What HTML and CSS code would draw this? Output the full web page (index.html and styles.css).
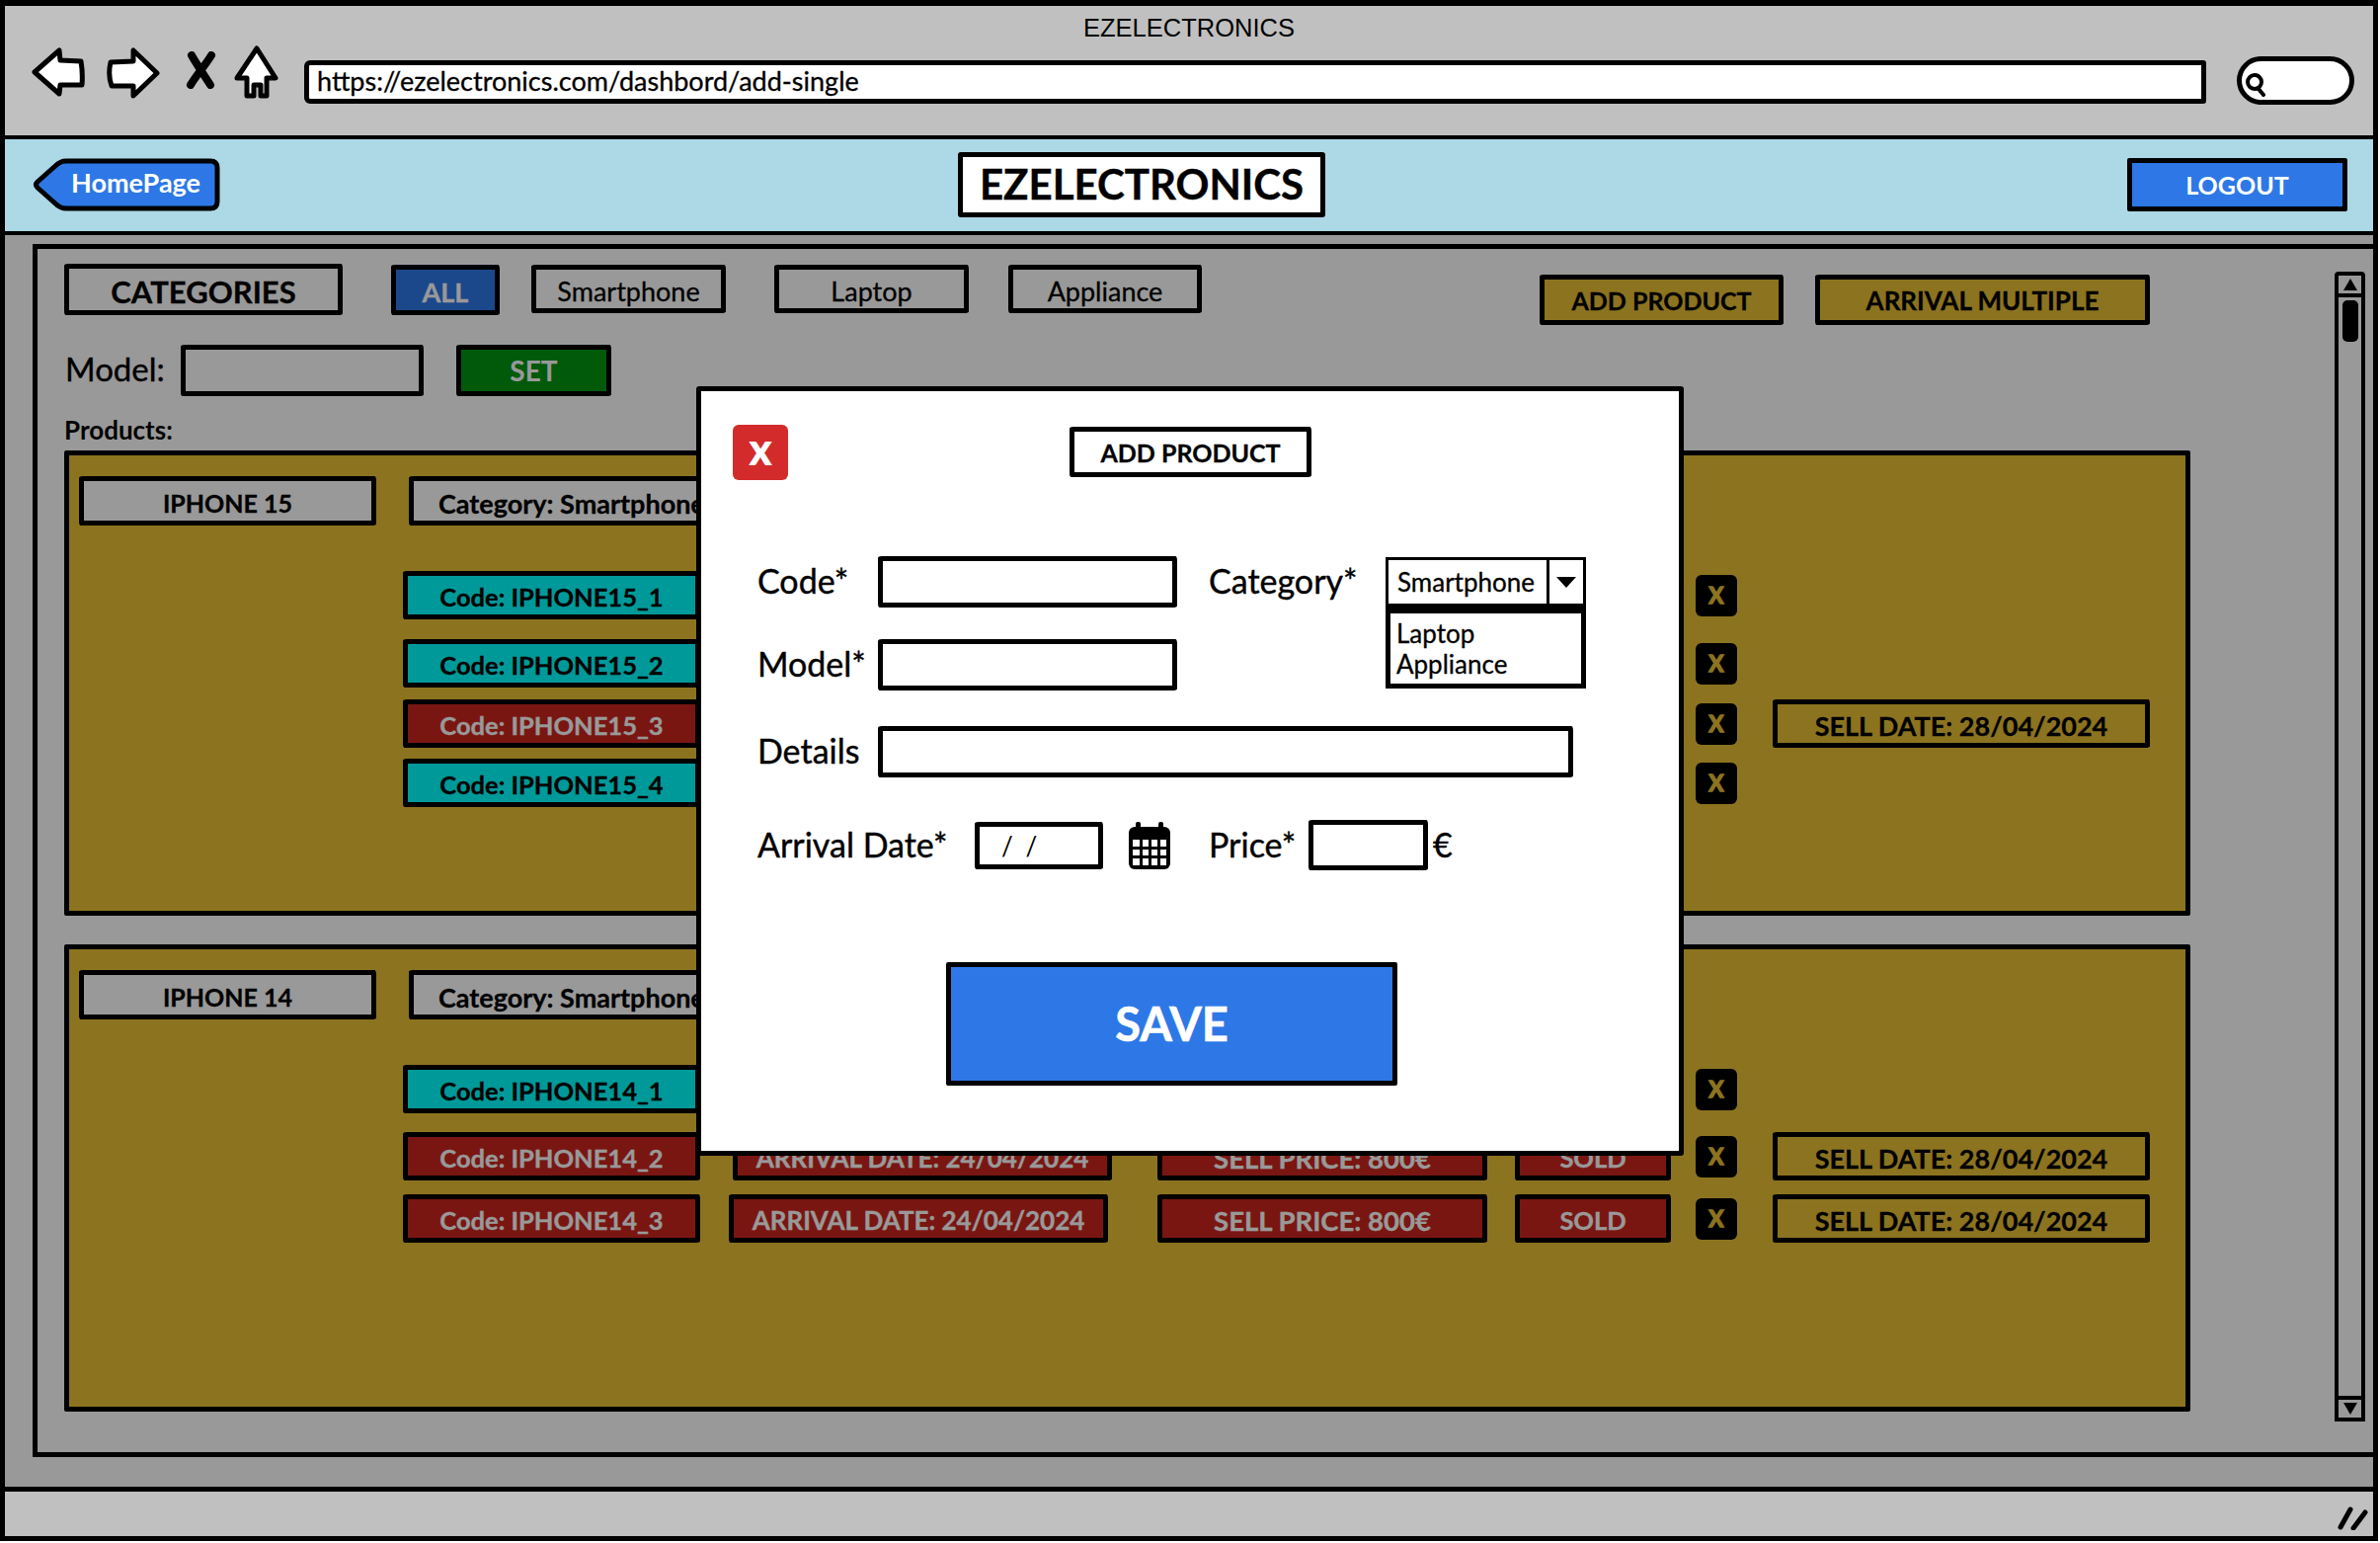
FILE: index.html
```html
<!DOCTYPE html>
<html lang="en">
<head>
    <meta charset="UTF-8">
    <title>EZELECTRONICS</title>
    <link rel="stylesheet" href="styles.css">
</head>
<body>
<div class="window">

    <div class="browser-bar">
        <div class="browser-title">EZELECTRONICS</div>
        <div class="toolbar">
            <svg class="ico-back" width="55" height="50" viewBox="0 0 55 50"><path d="M3 25 L28 3 L29 13 L50 14 Q52 26 51 38 L29 38 L28 47 Z" fill="#fff" stroke="#000" stroke-width="5" stroke-linejoin="round"/></svg>
            <svg class="ico-forward" width="56" height="52" viewBox="0 0 56 52"><path d="M53 26 L29 3 L29 14 L6 15 Q3 28 7 39 L29 39 L29 49 Z" fill="#fff" stroke="#000" stroke-width="5" stroke-linejoin="round"/></svg>
            <svg class="ico-stop" width="31" height="38" viewBox="0 0 31 38"><path d="M6 4 C11 13 20 26 25 34 M26 4 C20 14 10 25 5 34" fill="none" stroke="#000" stroke-width="8" stroke-linecap="round"/></svg>
            <svg class="ico-home" width="45" height="54" viewBox="0 0 45 54"><path d="M23 3 L42 33 L33 33 L33 51 L27 51 L27 40 L20 40 L20 51 L13 51 L13 33 L3 33 Z" fill="#fff" stroke="#000" stroke-width="5" stroke-linejoin="round"/></svg>
            <div class="url-bar">https://ezelectronics.com/dashbord/add-single</div>
            <div class="search-pill">
                <svg width="22" height="24" viewBox="0 0 22 24"><circle cx="9" cy="9" r="7" fill="none" stroke="#000" stroke-width="4"/><path d="M13 16 L18 22" stroke="#000" stroke-width="4" stroke-linecap="round"/></svg>
            </div>
        </div>
    </div>

    <div class="app-header">
        <div class="home-btn">
            <svg class="home-shape" width="190" height="54" viewBox="0 0 190 54"><path d="M34 3 L180 3 Q187 3 187 10 L187 44 Q187 51 180 51 L34 51 Q28 51 23 46 L5 30 Q2 27 5 24 L23 8 Q28 3 34 3 Z" fill="#2d78e6" stroke="#000" stroke-width="5" stroke-linejoin="round"/></svg>
            <span class="home-label">HomePage</span>
        </div>
        <div class="logo">EZELECTRONICS</div>
        <div class="logout">LOGOUT</div>
    </div>

    <div class="main">
        <div class="panel">
            <div class="panel-content">
                <div class="top-row">
                    <div class="box tab-title">CATEGORIES</div>
                    <div class="box tab tab-all">ALL</div>
                    <div class="box tab tab-smart">Smartphone</div>
                    <div class="box tab tab-laptop">Laptop</div>
                    <div class="box tab tab-appliance">Appliance</div>
                    <div class="box action action-add">ADD PRODUCT</div>
                    <div class="box action action-multiple">ARRIVAL MULTIPLE</div>
                </div>

                <div class="model-row">
                    <span class="model-label">Model:</span>
                    <div class="box model-input"></div>
                    <div class="box set-btn">SET</div>
                </div>

                <div class="products-label">Products:</div>

                <div class="card card-first">
                    <div class="card-head">
                        <div class="box name-box">IPHONE 15</div>
                        <div class="box category-box">Category: Smartphone</div>
                    </div>
                    <div class="row row-first">
                        <div class="box chip chip-free col-code">Code: IPHONE15_1</div>
                        <div class="del-btn">X</div>
                    </div>
                    <div class="row row-20">
                        <div class="box chip chip-free col-code">Code: IPHONE15_2</div>
                        <div class="del-btn">X</div>
                    </div>
                    <div class="row row-12">
                        <div class="box chip chip-sold col-code">Code: IPHONE15_3</div>
                        <div class="del-btn">X</div>
                        <div class="box chip col-date">SELL DATE: 28/04/2024</div>
                    </div>
                    <div class="row row-11">
                        <div class="box chip chip-free col-code">Code: IPHONE15_4</div>
                        <div class="del-btn">X</div>
                    </div>
                </div>

                <div class="card card-second">
                    <div class="card-head">
                        <div class="box name-box">IPHONE 14</div>
                        <div class="box category-box">Category: Smartphone</div>
                    </div>
                    <div class="row row-first">
                        <div class="box chip chip-free col-code">Code: IPHONE14_1</div>
                        <div class="del-btn">X</div>
                    </div>
                    <div class="row row-19">
                        <div class="box chip chip-sold col-code">Code: IPHONE14_2</div>
                        <div class="box chip chip-sold col-arrival shifted">ARRIVAL DATE: 24/04/2024</div>
                        <div class="box chip chip-sold col-price">SELL PRICE: 800€</div>
                        <div class="box chip chip-sold col-sold">SOLD</div>
                        <div class="del-btn">X</div>
                        <div class="box chip col-date">SELL DATE: 28/04/2024</div>
                    </div>
                    <div class="row row-14">
                        <div class="box chip chip-sold col-code">Code: IPHONE14_3</div>
                        <div class="box chip chip-sold col-arrival">ARRIVAL DATE: 24/04/2024</div>
                        <div class="box chip chip-sold col-price">SELL PRICE: 800€</div>
                        <div class="box chip chip-sold col-sold">SOLD</div>
                        <div class="del-btn">X</div>
                        <div class="box chip col-date">SELL DATE: 28/04/2024</div>
                    </div>
                </div>
            </div>

            <div class="scrollbar">
                <div class="scroll-up"><span class="tri-up"></span></div>
                <div class="scroll-thumb"></div>
                <div class="scroll-down"><span class="tri-down"></span></div>
            </div>
        </div>
        <div class="dim"></div>
    </div>

    <div class="status-bar">
        <svg width="31" height="25" viewBox="0 0 31 25"><path d="M3 22 L13 4 M16 23 L28 7" stroke="#000" stroke-width="5" stroke-linecap="round"/></svg>
    </div>

    <div class="modal">
        <div class="modal-head">
            <div class="close-btn">X</div>
            <div class="box modal-title">ADD PRODUCT</div>
        </div>

        <div class="form-grid">
            <label class="f-label">Code*</label>
            <div class="box f-input"></div>
            <label class="f-label">Category*</label>
            <div class="select-wrap">
                <div class="select">
                    <span class="select-value">Smartphone</span>
                    <span class="select-arrow"><span class="tri-down tri-big"></span></span>
                </div>
                <div class="select-menu">
                    <div>Laptop</div>
                    <div>Appliance</div>
                </div>
            </div>

            <label class="f-label row-model">Model*</label>
            <div class="box f-input row-model"></div>

            <label class="f-label row-details">Details</label>
            <div class="box f-input f-wide row-details"></div>
        </div>

        <div class="form-last">
            <label class="f-label arrival-label">Arrival Date*</label>
            <div class="box date-input"><span>/ /</span></div>
            <svg class="ico-cal" width="42" height="48" viewBox="0 0 42 48">
                <rect x="7" y="0" width="5" height="10" rx="2"/>
                <rect x="30" y="0" width="5" height="10" rx="2"/>
                <rect x="0" y="5" width="42" height="43" rx="6"/>
                <g fill="#fff">
                    <rect x="4" y="18" width="7" height="7"/><rect x="14" y="18" width="6" height="7"/><rect x="23" y="18" width="6" height="7"/><rect x="32" y="18" width="6" height="7"/>
                    <rect x="4" y="28" width="7" height="6"/><rect x="14" y="28" width="6" height="6"/><rect x="23" y="28" width="6" height="6"/><rect x="32" y="28" width="6" height="6"/>
                    <rect x="4" y="37" width="7" height="7"/><rect x="14" y="37" width="6" height="7"/><rect x="23" y="37" width="6" height="7"/><rect x="32" y="37" width="6" height="7"/>
                </g>
            </svg>
            <label class="f-label price-label">Price*</label>
            <div class="box price-input"></div>
            <span class="f-label euro">€</span>
        </div>

        <div class="save-btn">SAVE</div>
    </div>

</div>
</body>
</html>
```

FILE: styles.css
```css
body {
    margin: 0;
    background: #fff;
    font-family: "Lato", "Liberation Sans", sans-serif;
    color: #000;
}

.window {
    position: relative;
    width: 2408px;
    height: 1560px;
    box-sizing: border-box;
    border: 5px solid #000;
    border-top-width: 6px;
    display: flex;
    flex-direction: column;
    overflow: hidden;
}

.box {
    box-sizing: border-box;
    border: 5px solid #000;
    border-radius: 4px 2px 5px 2px / 2px 5px 2px 4px;
    display: flex;
    align-items: center;
    justify-content: center;
}

/* browser chrome */
.browser-bar {
    height: 135px;
    flex: none;
    box-sizing: border-box;
    background: #c0c0c0;
    border-bottom: 4px solid #000;
    padding: 8px 0 0 27px;
}

.browser-title {
    font-family: "Liberation Sans", sans-serif;
    font-size: 25.5px;
    line-height: 28px;
    text-align: center;
    margin-left: -27px;
}

.toolbar {
    display: flex;
    align-items: flex-start;
    margin-top: 4px;
}

.ico-back { margin-top: 2px; }
.ico-forward { margin: 2px 0 0 19px; }
.ico-stop { margin: 6px 0 0 26px; }
.ico-home { margin-left: 18px; }

.url-bar {
    width: 1926px;
    height: 44px;
    box-sizing: border-box;
    margin: 15px 0 0 26px;
    padding-left: 8px;
    background: #fff;
    border: 5px solid #000;
    border-radius: 6px 3px 3px 6px;
    font-size: 27px;
    line-height: 32px;
    -webkit-text-stroke: 0.3px #000;
}

.search-pill {
    width: 119px;
    height: 49px;
    box-sizing: border-box;
    margin: 11px 0 0 31px;
    padding: 12px 0 0 4px;
    background: #fff;
    border: 5px solid #000;
    border-radius: 25px;
}

.search-pill svg { display: block; }

/* app header */
.app-header {
    height: 97px;
    flex: none;
    box-sizing: border-box;
    background: #add8e6;
    border-bottom: 4px solid #000;
    display: flex;
    align-items: flex-start;
    position: relative;
}

.home-btn {
    position: relative;
    width: 190px;
    height: 54px;
    margin: 19px 0 0 28px;
}

.home-shape {
    position: absolute;
    left: 0;
    top: 0;
}

.home-label {
    position: relative;
    display: block;
    padding-left: 39px;
    color: #fff;
    font-weight: 700;
    font-size: 27px;
    line-height: 50px;
}

.logo {
    width: 372px;
    height: 66px;
    box-sizing: border-box;
    margin: 13px 0 0 747px;
    background: #fff;
    border: 5px solid #000;
    border-radius: 3px;
    text-align: center;
    font-weight: 700;
    font-size: 42px;
    line-height: 54px;
    -webkit-text-stroke: 0.4px #000;
}

.logout {
    width: 223px;
    height: 54px;
    box-sizing: border-box;
    margin: 19px 0 0 812px;
    background: #2d78e6;
    border: 5px solid #000;
    border-radius: 2px;
    color: #fff;
    text-align: center;
    font-weight: 700;
    font-size: 25px;
    line-height: 44px;
}

/* main area */
.main {
    position: relative;
    flex: 1;
    box-sizing: border-box;
    background: #fff;
    padding: 9px 0 30px 28px;
    display: flex;
}

.dim {
    position: absolute;
    inset: 0;
    background: rgba(0, 0, 0, 0.4);
}

.status-bar {
    height: 50px;
    flex: none;
    box-sizing: border-box;
    background: #c0c0c0;
    border-top: 5px solid #000;
    display: flex;
    justify-content: flex-end;
    padding: 14px 5px 0 0;
}

.panel {
    flex: 1;
    display: flex;
    box-sizing: border-box;
    border: 5px solid #000;
    border-right: 0;
    padding: 15px 8px 0 27px;
}

.panel-content { width: 2153px; }

.top-row {
    display: flex;
    align-items: flex-start;
}

.tab-title {
    width: 282px;
    height: 52px;
    padding-top: 3px;
    font-weight: 700;
    font-size: 31px;
    -webkit-text-stroke: 0.3px #000;
}

.tab {
    height: 49px;
    margin-top: 1px;
    padding-top: 3px;
    font-size: 27px;
    -webkit-text-stroke: 0.3px currentColor;
}

.tab-all {
    width: 110px;
    height: 51px;
    margin-left: 49px;
    background: #2d78e6;
    color: #fff;
    font-weight: 700;
}

.tab-smart { width: 197px; margin-left: 32px; }
.tab-laptop { width: 197px; margin-left: 49px; }
.tab-appliance { width: 196px; margin-left: 40px; }

.action {
    height: 51px;
    margin-top: 11px;
    background: #e9c035;
    font-weight: 700;
    -webkit-text-stroke: 0.3px #000;
}

.action-add { width: 247px; margin-left: 342px; font-size: 25px; }
.action-multiple { width: 339px; margin-left: 32px; font-size: 26px; }

.model-row {
    display: flex;
    align-items: center;
    height: 52px;
    margin-top: 20px;
}

.model-label {
    width: 118px;
    padding: 0 0 4px 1px;
    box-sizing: border-box;
    font-size: 33px;
    -webkit-text-stroke: 0.4px #000;
}

.model-input {
    width: 246px;
    height: 52px;
}

.set-btn {
    width: 157px;
    height: 52px;
    margin-left: 33px;
    background: #009611;
    color: #fff;
    font-weight: 700;
    font-size: 28px;
}

.products-label {
    margin-top: 22px;
    font-weight: 700;
    font-size: 26px;
    line-height: 24px;
}

/* product cards */
.card {
    box-sizing: border-box;
    background: #e9c035;
    border: 5px solid #000;
    border-radius: 2px;
    padding: 0 0 0 10px;
}

.card-first { height: 471px; margin-top: 9px; padding-top: 21px; }
.card-second { height: 473px; margin-top: 29px; padding-top: 21px; }

.card-head {
    display: flex;
    gap: 33px;
}

.name-box,
.category-box {
    height: 50px;
    padding-top: 4px;
    background: #fff;
    font-weight: 700;
    -webkit-text-stroke: 0.3px #000;
}

.name-box { width: 301px; font-size: 25px; }

.category-box {
    width: 326px;
    justify-content: flex-start;
    padding-left: 25px;
    font-size: 27px;
    white-space: nowrap;
}

.row {
    display: grid;
    grid-template-columns: 330px 434px 362px 183px 78px 382px;
    margin-left: 328px;
    align-items: center;
}

.row-first { margin-top: 46px; }
.row-20 { margin-top: 20px; }
.row-19 { margin-top: 19px; }
.row-14 { margin-top: 14px; }
.row-12 { margin-top: 12px; }
.row-11 { margin-top: 11px; }

.chip {
    height: 49px;
    padding-top: 3px;
    font-weight: 700;
    font-size: 25.5px;
    white-space: nowrap;
    -webkit-text-stroke: 0.3px currentColor;
}

.chip-free { background: #00ffff; }
.chip-sold { background: #cb261e; color: #fff; }

.col-code { grid-column: 1; width: 301px; }
.col-arrival { grid-column: 2; width: 384px; font-size: 26px; }
.col-arrival.shifted { margin-left: 4px; }
.col-price { grid-column: 3; width: 334px; font-size: 27.5px; }
.col-sold { grid-column: 4; width: 158px; }
.col-date { grid-column: 6; width: 382px; font-size: 27px; }

.del-btn {
    grid-column: 5;
    width: 42px;
    height: 42px;
    background: #000;
    border-radius: 6px;
    color: #e9c035;
    text-align: center;
    font-weight: 700;
    font-size: 22px;
    line-height: 42px;
    -webkit-text-stroke: 1.5px #e9c035;
}

/* scrollbar */
.scrollbar {
    width: 31px;
    height: 1164px;
    box-sizing: border-box;
    margin: 8px 0 0 auto;
    border: 4px solid #000;
    border-radius: 4px 4px 0 0;
    display: flex;
    flex-direction: column;
    align-items: center;
}

.scroll-up,
.scroll-down {
    width: 100%;
    height: 18px;
    flex: none;
    display: flex;
    align-items: center;
    justify-content: center;
}

.scroll-up { border-bottom: 4px solid #000; }
.scroll-down { border-top: 4px solid #000; margin-top: auto; }

.scroll-thumb {
    width: 16px;
    height: 42px;
    margin-top: 3px;
    background: #000;
    border-radius: 5px;
}

.tri-up {
    border-left: 7px solid transparent;
    border-right: 7px solid transparent;
    border-bottom: 12px solid #000;
}

.tri-down {
    border-left: 7px solid transparent;
    border-right: 7px solid transparent;
    border-top: 12px solid #000;
}

/* modal */
.modal {
    position: absolute;
    left: 700px;
    top: 385px;
    width: 1000px;
    height: 779px;
    box-sizing: border-box;
    background: #fff;
    border: 5px solid #000;
    border-radius: 3px;
}

.modal-head {
    display: flex;
    align-items: flex-start;
    padding: 34px 0 0 32px;
}

.close-btn {
    width: 56px;
    height: 56px;
    background: #d32b2b;
    border-radius: 6px;
    color: #fff;
    text-align: center;
    font-weight: 700;
    font-size: 30px;
    line-height: 56px;
    -webkit-text-stroke: 2px #fff;
}

.modal-title {
    width: 245px;
    height: 51px;
    margin: 2px 0 0 285px;
    font-weight: 700;
    font-size: 25px;
    -webkit-text-stroke: 0.3px #000;
}

.form-grid {
    display: grid;
    grid-template-columns: 122px 335px 179px 203px;
    align-items: center;
    margin: 77px 0 0 57px;
}

.f-label {
    padding-bottom: 2px;
    font-size: 34px;
    line-height: 40px;
    -webkit-text-stroke: 0.4px #000;
}

.f-input {
    width: 303px;
    height: 52px;
}

.f-input.f-wide {
    grid-column: 2 / 5;
    width: 704px;
}

.row-model { grid-row: 2; margin-top: 32px; }
.row-details { grid-row: 3; margin-top: 36px; }

.select-wrap {
    position: relative;
    height: 50px;
}

.select {
    height: 50px;
    box-sizing: border-box;
    border: 3px solid #000;
    display: flex;
    font-size: 26px;
    line-height: 44px;
    -webkit-text-stroke: 0.3px #000;
}

.select-value {
    width: 163px;
    padding-left: 9px;
    box-sizing: border-box;
    border-right: 3px solid #000;
}

.select-arrow {
    flex: 1;
    display: flex;
    align-items: center;
    justify-content: center;
}

.tri-big {
    border-left-width: 10px;
    border-right-width: 10px;
    border-top-width: 11px;
}

.select-menu {
    position: absolute;
    left: 0;
    right: 0;
    top: 50px;
    height: 83px;
    box-sizing: border-box;
    background: #fff;
    border: 5px solid #000;
    border-top-width: 7px;
    padding: 5px 0 0 6px;
    font-size: 26px;
    line-height: 31px;
    -webkit-text-stroke: 0.3px #000;
}

.form-last {
    display: flex;
    align-items: center;
    margin: 43px 0 0 57px;
    height: 51px;
}

.arrival-label { width: 220px; }

.date-input {
    width: 130px;
    height: 48px;
    justify-content: flex-start;
    padding-left: 22px;
    font-size: 26px;
}

.date-input span { word-spacing: 6px; }

.ico-cal { margin-left: 26px; flex: none; }

.price-label { width: 101px; margin-left: 39px; }

.price-input {
    width: 121px;
    height: 51px;
}

.euro { margin-left: 5px; }

.save-btn {
    width: 457px;
    height: 125px;
    box-sizing: border-box;
    margin: 93px 0 0 248px;
    background: #2d78e6;
    border: 5px solid #000;
    border-radius: 2px;
    color: #fff;
    text-align: center;
    font-weight: 700;
    font-size: 47px;
    line-height: 115px;
    -webkit-text-stroke: 0.6px #fff;
}
```
